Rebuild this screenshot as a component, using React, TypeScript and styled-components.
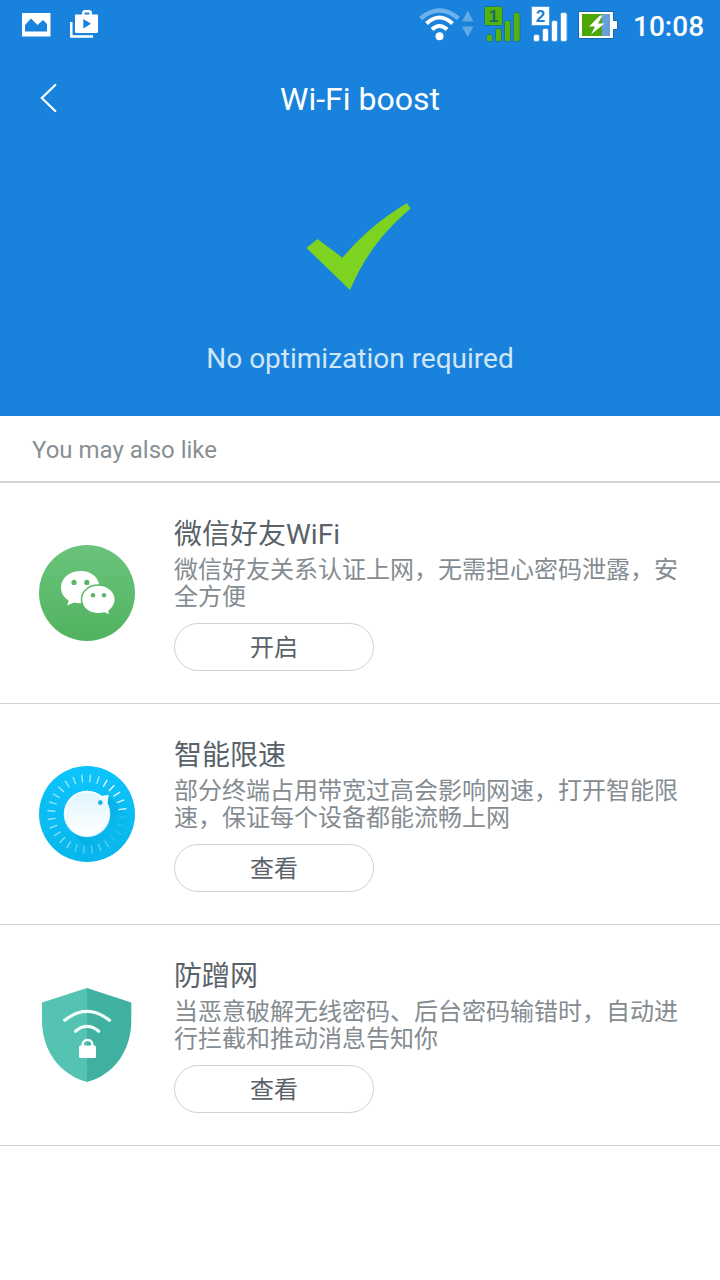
import React from "react";
import styled, { createGlobalStyle } from "styled-components";

const Global = createGlobalStyle`
  * { box-sizing: border-box; }
  body { margin: 0; background: #fff; }
`;

const Screen = styled.div`
  width: 720px;
  min-height: 1280px;
  display: flex;
  flex-direction: column;
  background: #fff;
  font-family: Roboto, "Noto Sans CJK SC", sans-serif;
`;

const Hero = styled.header`
  height: 416px;
  background: #1882dc;
  color: #fff;
`;

const StatusBar = styled.div`
  height: 50px;
  padding: 0 17px 0 18px;
  display: flex;
  align-items: center;
  justify-content: space-between;
`;

const StatusGroup = styled.div`
  display: flex;
  align-items: center;
  height: 50px;
`;

const Clock = styled.span`
  width: 70px;
  margin-left: 13px;
  padding-top: 3px;
  font-size: 28px;
  font-weight: 500;
  line-height: 33px;
  white-space: nowrap;
`;

const Toolbar = styled.div`
  height: 96px;
  display: grid;
  grid-template-columns: 96px 1fr 96px;
  align-items: center;
`;

const BackButton = styled.button`
  width: 96px;
  height: 96px;
  padding: 0;
  border: 0;
  background: none;
  display: flex;
`;

const Title = styled.h1`
  margin: 1px 0 0;
  font-size: 32px;
  line-height: 40px;
  font-weight: 400;
  text-align: center;
`;

const Result = styled.div`
  display: flex;
  flex-direction: column;
  align-items: center;
  padding-top: 54px;
`;

const ResultText = styled.p`
  margin: 41px 0 0;
  font-size: 28px;
  line-height: 36px;
  color: #d1e6f8;
`;

const SectionTitle = styled.h2`
  margin: 0;
  height: 67px;
  padding: 2px 32px 0;
  border-bottom: 2px solid #d4d6d7;
  font-size: 24px;
  font-weight: 400;
  line-height: 64px;
  color: #888f94;
`;

const Row = styled.section`
  height: 221px;
  display: flex;
  padding: 34px 32px 0 30px;
  border-bottom: 1px solid #d0d2d3;
`;

const IconSlot = styled.div`
  width: 144px;
  padding-top: 18px;
  flex: none;
`;

const RowTitle = styled.h3`
  margin: 0;
  font-size: 28px;
  font-weight: 400;
  line-height: 36px;
  color: #596269;
`;

const RowText = styled.p`
  margin: 4px 0 0;
  width: 510px;
  font-size: 24px;
  line-height: 27px;
  color: #858c91;
`;

const PillButton = styled.button`
  display: block;
  width: 200px;
  height: 48px;
  margin: 12px 0 0;
  padding: 2px 0 0;
  border: 1px solid #d0d2d3;
  border-radius: 24px;
  background: #fff;
  font-family: inherit;
  font-size: 24px;
  line-height: 44px;
  color: #596269;
`;

const NoticeIcons = () => (
  <svg width="84" height="50" viewBox="18 0 84 50">
    <path fill="#fff" fillRule="evenodd" d="M22 13H50.500V36.500H22ZM25 31.500H47V24L43 20L37.500 25L31 18.500L25 25Z" />
    <path fill="#fff" fillRule="evenodd" d="M75 14.500H82V13Q82 10 85 10H89Q92 10 92 13V14.500H98V31.500Q98 33 96.500 33H76.500Q75 33 75 31.500ZM84.500 14.500H89.500V13.500Q89.500 12.500 88.500 12.500H85.500Q84.500 12.500 84.500 13.500ZM83.300 19V28.500L91 23.700Z" />
    <path fill="none" stroke="#fff" strokeWidth="2.500" d="M71.300 22V36.500H93" />
  </svg>
);

const WifiIcon = () => (
  <svg width="62" height="50" viewBox="418 0 62 50">
    <g fill="none" strokeWidth="4">
      <path stroke="#6db2ed" strokeWidth="4.500" d="M420.500 18.500Q439.500 2.500 458.500 18.500" />
      <path stroke="#fff" d="M426.500 23.500Q439.500 11.500 452.500 23.500" />
      <path stroke="#fff" d="M432 29.500Q439.500 22.500 447 29.500" />
    </g>
    <circle cx="439.500" cy="36.300" r="4" fill="#fff" />
    <path fill="#62a9e8" d="M467.700 10.500L473.500 21.500H462ZM467.700 37L473.500 26.500H462Z" />
  </svg>
);

const SimText = styled.text`
  font-family: "Liberation Sans", sans-serif;
  font-size: 17px;
  font-weight: 700;
  text-anchor: middle;
`;

const Sim = ({ n, color, edge, width }: { n: number; color: string; edge: string; width: number }) => (
  <svg width={width} height="50" viewBox={`0 0 ${width} 50`}>
    <g fill={color} stroke={edge} strokeWidth="1">
      <rect x="6.500" y="34.500" width="6" height="7" rx="2" />
      <rect x="15.500" y="28.500" width="6" height="13" rx="2" />
      <rect x="24.500" y="20.500" width="6" height="21" rx="2" />
      <rect x="33.500" y="12.500" width="6.500" height="29" rx="2" />
      <rect x="4.500" y="6.500" width="18" height="19" rx="1" />
    </g>
    <SimText x="13.500" y="22" fill={n === 1 ? "#146d6a" : "#1882dc"}>{n}</SimText>
  </svg>
);

const Battery = () => (
  <svg width="42" height="50" viewBox="578 0 42 50">
    <path fill="#fff" stroke="#1268ad" d="M578.500 11.500H613.500V20.500H617.500V29.500H613.500V38.500H578.500Z" />
    <rect x="582" y="14" width="20" height="22" fill="#4ca706" />
    <rect x="602" y="14" width="8" height="22" fill="#679fdd" />
    <path fill="#fff" d="M600 15.500L589 26.500H595L591 34.500L604.500 23.500H598L602.500 15.500Z" />
  </svg>
);

const BackArrow = () => (
  <svg width="96" height="96" viewBox="0 50 96 96">
    <path d="M55.300 85L41.800 98L55.300 111" fill="none" stroke="#fff" strokeWidth="2.200" strokeLinecap="round" />
  </svg>
);

const Check = () => (
  <svg width="120" height="100" viewBox="300 200 120 100">
    <path fill="#7ed321" d="M306.500 248L317.500 239L342.500 257.700C362 235 382 218 406.700 203.200L410.700 208.500C385 230 365 255 350 290Z" />
  </svg>
);

const WeChat = () => (
  <svg width="114" height="114" viewBox="30 535 114 114">
    <defs>
      <linearGradient id="wechat" x1="0" y1="0" x2="0" y2="1">
        <stop stopColor="#6ac47b" />
        <stop offset="1" stopColor="#50b35f" />
      </linearGradient>
    </defs>
    <circle cx="87" cy="593" r="48" fill="url(#wechat)" />
    <path fill="#fff" d="M80.500 571C69.500 571 61 578 61 587.500C61 593 63.500 597 68.500 600.500L67.300 605.500L74 602.500Q77 603.500 83 603L96 594L99.500 587C99 577 91 571 80.500 571Z" />
    <path fill="#fff" stroke="#58b968" strokeWidth="1.500" d="M98.500 585C88.500 585 81.500 591.500 81.500 599.500C81.500 608 89 613.800 98.500 613.800Q101.500 613.800 104.500 613L110 615.500L109 611C113 608 115.300 604 115.300 599.500C115.300 591 107.500 585 98.500 585Z" />
    <g fill="#56b765">
      <circle cx="74" cy="582.400" r="2.600" />
      <circle cx="86.800" cy="582.400" r="2.600" />
      <circle cx="93" cy="595.300" r="2.200" />
      <circle cx="104" cy="595.300" r="2.200" />
    </g>
  </svg>
);

const tickOpacity = (angle: number) => {
  if (angle >= 18 && angle < 85) return 0.95;
  if (angle >= 85 && angle < 145) return 0.12;
  if (angle >= 145 && angle < 200) return 0.35;
  if (angle >= 200 && angle < 240) return 0.5;
  return 0.65;
};

const ticks = Array.from({ length: 28 }, (_, i) => 5 + (i * 360) / 28);

const Dial = () => (
  <svg width="114" height="114" viewBox="30 756 114 114">
    <defs>
      <linearGradient id="dial" x1="0" y1="0" x2="0" y2="1">
        <stop stopColor="#0cc4fb" />
        <stop offset="1" stopColor="#07b6ec" />
      </linearGradient>
      <linearGradient id="knob" x1="0" y1="0" x2="0" y2="1">
        <stop stopColor="#def5fc" />
        <stop offset="1" stopColor="#fff" />
      </linearGradient>
      <linearGradient id="shade" x1="0" y1="0" x2="1" y2="1">
        <stop offset="0.400" stopColor="#0592c5" stopOpacity="0.350" />
        <stop offset="0.750" stopColor="#07a7dc" stopOpacity="0" />
      </linearGradient>
    </defs>
    <circle cx="87" cy="814" r="48" fill="url(#dial)" />
    <path fill="url(#shade)" d="M108.500 795L130 817C130 838 115 852 96 857L71 831Z" />
    {ticks.map((a) => (
      <path
        key={a}
        d="M87 774.300V782.200"
        stroke="#fff"
        strokeWidth="1.300"
        opacity={tickOpacity(a)}
        transform={`rotate(${a} 87 814)`}
      />
    ))}
    <path fill="#f7fdff" d="M98 796.500L108.700 794.700L107.500 804Z" />
    <circle cx="87" cy="814" r="23.300" fill="#c7effb" />
    <circle cx="87" cy="813.500" r="22.700" fill="#f7fdff" />
    <circle cx="87" cy="813.500" r="21" fill="url(#knob)" />
    <circle cx="100.300" cy="802.600" r="2.300" fill="#18b2e5" />
  </svg>
);

const Shield = () => (
  <svg width="114" height="114" viewBox="30 977 114 114">
    <path fill="#55c3b2" d="M87 988L42 1002.500V1020C42 1052 61 1075 87 1082Z" />
    <path fill="#40b1a1" d="M87 988L131.300 1002.500V1020C131.300 1052 113 1075 87 1082Z" />
    <g fill="none" stroke="#f2fffc" strokeWidth="3.200" strokeLinecap="round">
      <path d="M64.700 1020.300Q87 1002.500 109.500 1020.300" />
      <path d="M75.500 1031.300Q87 1021.500 98.700 1031.300" />
      <path strokeWidth="2.500" d="M82.700 1046V1044.500C82.700 1038.500 92.300 1038.500 92.300 1044.500V1046" />
    </g>
    <rect x="79" y="1045.500" width="17" height="12.500" rx="1.500" fill="#fff" />
  </svg>
);

const items = [
  { Icon: WeChat, title: "微信好友WiFi", text: "微信好友关系认证上网，无需担心密码泄露，安全方便", action: "开启" },
  { Icon: Dial, title: "智能限速", text: "部分终端占用带宽过高会影响网速，打开智能限速，保证每个设备都能流畅上网", action: "查看" },
  { Icon: Shield, title: "防蹭网", text: "当恶意破解无线密码、后台密码输错时，自动进行拦截和推动消息告知你", action: "查看" },
];

export default function App() {
  return (
    <Screen lang="zh-CN">
      <Global />
      <Hero>
        <StatusBar>
          <StatusGroup>
            <NoticeIcons />
          </StatusGroup>
          <StatusGroup>
            <WifiIcon />
            <Sim n={1} color="#56b20b" edge="#14799b" width={47} />
            <Sim n={2} color="#fff" edge="#4b9de4" width={51} />
            <Battery />
            <Clock>10:08</Clock>
          </StatusGroup>
        </StatusBar>
        <Toolbar>
          <BackButton aria-label="Back">
            <BackArrow />
          </BackButton>
          <Title>Wi-Fi boost</Title>
        </Toolbar>
        <Result>
          <Check />
          <ResultText>No optimization required</ResultText>
        </Result>
      </Hero>
      <SectionTitle>You may also like</SectionTitle>
      {items.map(({ Icon, title, text, action }) => (
        <Row key={title}>
          <IconSlot>
            <Icon />
          </IconSlot>
          <div>
            <RowTitle>{title}</RowTitle>
            <RowText>{text}</RowText>
            <PillButton>{action}</PillButton>
          </div>
        </Row>
      ))}
    </Screen>
  );
}
